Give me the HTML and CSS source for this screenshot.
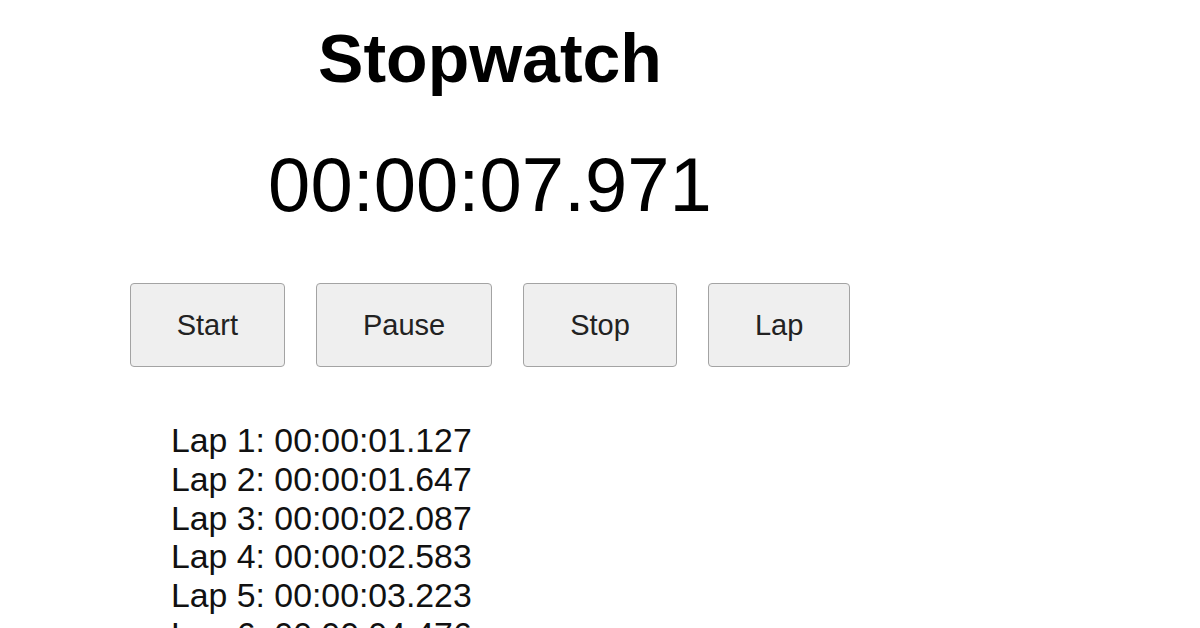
FILE: index.html
```html
<!DOCTYPE html>
<html lang="en">
<head>
    <meta charset="UTF-8">
    <meta name="viewport" content="width=device-width, initial-scale=1.0">
    <title>Stopwatch</title>
    <link rel="stylesheet" href="styles.css">
</head>
<body>
    <div class="stopwatch">
        <h1>Stopwatch</h1>
        <div class="display" id="display">00:00:07.971</div>

        <div class="controls">
            <button>Start</button>
            <button>Pause</button>
            <button>Stop</button>
            <button>Lap</button>
        </div>

        <ul class="laps" id="laps">
            <li>Lap 1: 00:00:01.127</li>
            <li>Lap 2: 00:00:01.647</li>
            <li>Lap 3: 00:00:02.087</li>
            <li>Lap 4: 00:00:02.583</li>
            <li>Lap 5: 00:00:03.223</li>
            <li>Lap 6: 00:00:04.476</li>
        </ul>
    </div>
</body>
</html>
```

FILE: styles.css
```css
body {
    font-family: "Liberation Sans", Arial, sans-serif;
    background: #fff;
    color: #000;
    margin: 0;
    overflow: hidden;
}
.stopwatch {
    width: 980px;
    text-align: center;
}
h1 {
    font-size: 68px;
    font-weight: bold;
    margin: 19px 0 0;
}
.display {
    font-size: 76px;
    margin-top: 44px;
}
.controls {
    display: flex;
    justify-content: center;
    gap: 31px;
    margin-top: 55px;
}
button {
    font-family: inherit;
    font-size: 29px;
    color: #222;
    background: #efefef;
    border: 1px solid #a3a3a3;
    border-radius: 4px;
    padding: 24.5px 46px;
    cursor: pointer;
}
.laps {
    list-style: none;
    margin: 54px 0 0;
    padding: 0 0 0 171px;
    text-align: left;
    font-size: 33.8px;
    line-height: 38.75px;
    color: #111;
}
```
